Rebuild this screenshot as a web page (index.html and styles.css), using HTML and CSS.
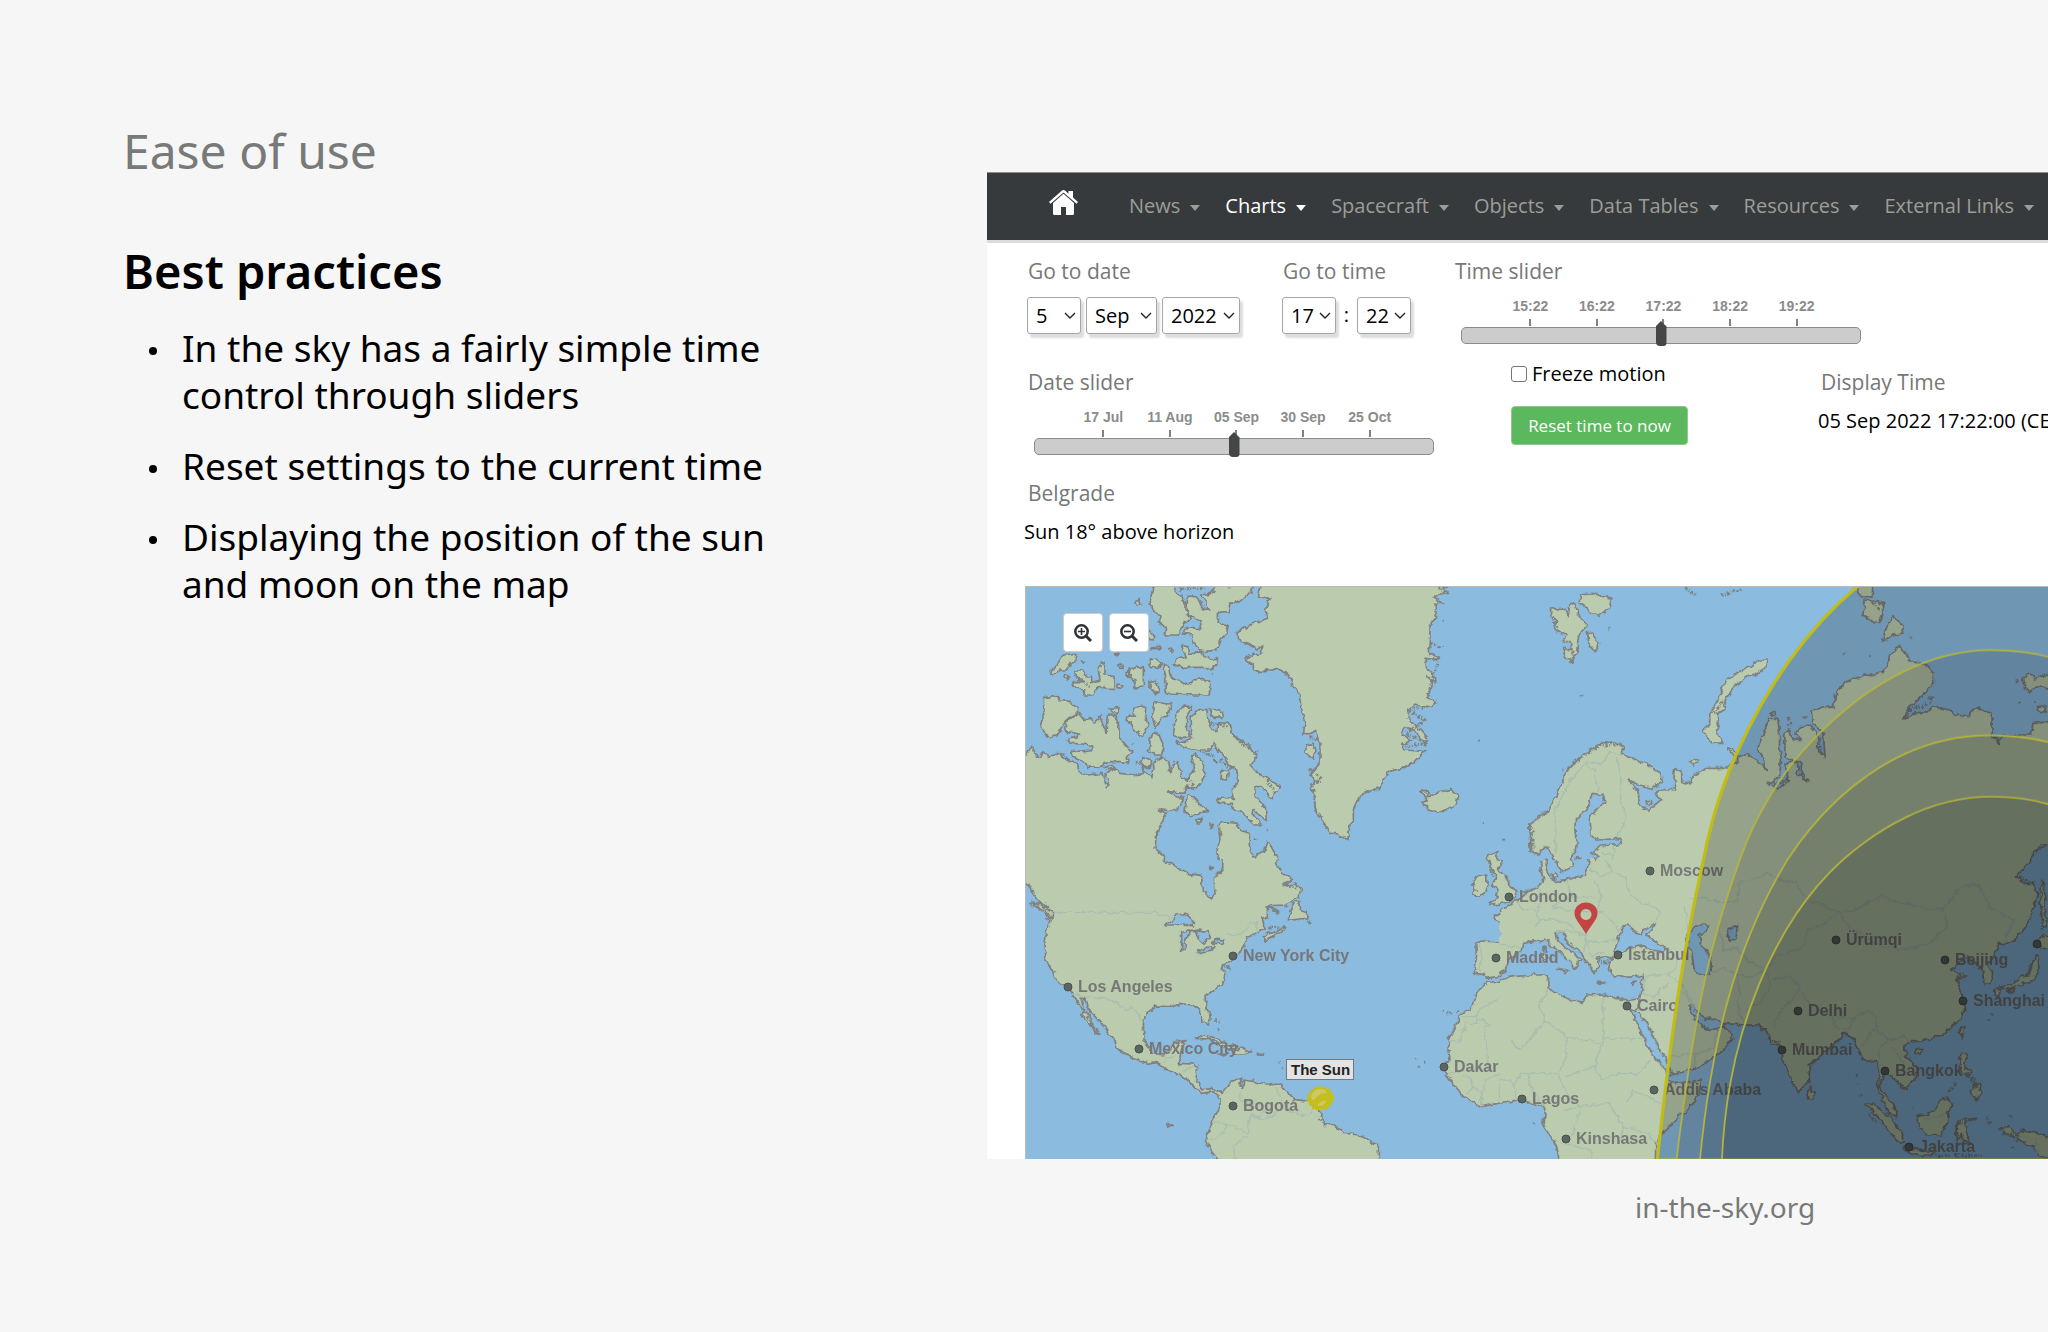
FILE: index.html
```html
<!DOCTYPE html>
<html lang="en">
<head>
<meta charset="utf-8">
<title>Ease of use</title>
<link rel="stylesheet" href="styles.css">
</head>
<body>
<main class="slide">
  <section class="notes">
    <p class="kicker">Ease of use</p>
    <h1>Best practices</h1>
    <ul>
      <li>In the sky has a fairly simple time<br>control through sliders</li>
      <li>Reset settings to the current time</li>
      <li>Displaying the position of the sun<br>and moon on the map</li>
    </ul>
  </section>

  <figure class="example">
    <div class="site">
      <nav class="nav">
        <a class="home" href="#" aria-label="Home">
          <svg viewBox="0 0 29 25" width="29" height="25"><path d="M14.500 3.800 4 13V23.500Q4 25 5.500 25H12V17H17V25H23.500Q25 25 25 23.500V13Z"/><path d="M14.500 0Q15.300 0 16 .6L19.500 3.700V1H24V7.500L29 12 27.500 13.700 14.500 2.600 1.500 13.700 0 12 13 .6Q13.700 0 14.500 0Z"/></svg>
        </a>
        <a class="item" href="#">News</a>
        <a class="item active" href="#">Charts</a>
        <a class="item" href="#">Spacecraft</a>
        <a class="item" href="#">Objects</a>
        <a class="item" href="#">Data Tables</a>
        <a class="item" href="#">Resources</a>
        <a class="item" href="#">External Links</a>
      </nav>

      <form class="controls">
        <div class="col-left">
          <div class="pickers">
            <fieldset class="pick-date">
              <legend class="label">Go to date</legend>
              <div class="selects">
                <select class="sel-day" aria-label="Day"><option>5</option></select>
                <select class="sel-month" aria-label="Month"><option>Sep</option></select>
                <select class="sel-year" aria-label="Year"><option>2022</option></select>
              </div>
            </fieldset>
            <fieldset>
              <legend class="label">Go to time</legend>
              <div class="selects">
                <select class="sel-day" aria-label="Hour"><option>17</option></select>
                <span class="colon">:</span>
                <select class="sel-day" aria-label="Minute"><option>22</option></select>
              </div>
            </fieldset>
          </div>
          <div class="slider">
            <label class="label" for="date-range">Date slider</label>
            <div class="ticks"><span>17 Jul</span><span>11 Aug</span><span>05 Sep</span><span>30 Sep</span><span>25 Oct</span></div>
            <input id="date-range" type="range" min="0" max="100" value="50">
          </div>
        </div>
        <div class="col-right">
          <div class="slider">
            <label class="label" for="time-range">Time slider</label>
            <div class="ticks"><span>15:22</span><span>16:22</span><span>17:22</span><span>18:22</span><span>19:22</span></div>
            <input id="time-range" type="range" min="0" max="100" value="50">
          </div>
          <div class="below">
            <div class="actions">
              <label class="check"><input type="checkbox">Freeze motion</label>
              <button class="reset" type="button">Reset time to now</button>
            </div>
            <div class="display">
              <p class="label">Display Time</p>
              <p class="value">05 Sep 2022 17:22:00 (CEST)</p>
            </div>
          </div>
        </div>
      </form>

      <div class="place">
        <p class="label">Belgrade</p>
        <p class="value">Sun 18° above horizon</p>
      </div>

      <div class="map">
        <div class="zoom">
          <button type="button" aria-label="Zoom in"><svg viewBox="0 0 18 18" width="18" height="18"><circle cx="7.500" cy="7.500" r="6.200"/><path class="handle" d="M12 12 17 17"/><path class="sign" d="M4 7.500H11M7.500 4V11"/></svg></button>
          <button type="button" aria-label="Zoom out"><svg viewBox="0 0 18 18" width="18" height="18"><circle cx="7.500" cy="7.500" r="6.200"/><path class="handle" d="M12 12 17 17"/><path class="sign" d="M4 7.500H11"/></svg></button>
        </div>
        <svg class="world" viewBox="0 0 1022 572" role="img" aria-label="World map with day and night regions">
          <defs>
            <clipPath id="tile-nw"><rect x="-10" y="-10" width="1451" height="851"/></clipPath>
            <clipPath id="tile-sw"><rect x="-10" y="0" width="1451" height="950"/></clipPath>
            <clipPath id="tile-ne"><rect x="0" y="-10" width="1700" height="851"/></clipPath>
            <clipPath id="tile-se"><rect x="0" y="0" width="1700" height="950"/></clipPath>
            <!-- roughens the coastlines -->
            <filter id="coast" filterUnits="userSpaceOnUse" x="-8" y="-8" width="1040" height="590" color-interpolation-filters="sRGB">
              <feTurbulence type="fractalNoise" baseFrequency=".16" numOctaves="2" seed="4" result="noise"/>
              <feDisplacementMap in="SourceGraphic" in2="noise" scale="6" xChannelSelector="R" yChannelSelector="G"/>
            </filter>
          </defs>
          <rect class="sea" width="1022" height="572"/>
          <g filter="url(#coast)">
          <g transform="scale(.33333) translate(-18 -21)">
            <!-- Arctic Canada, Greenland, Iceland -->
            <g clip-path="url(#tile-nw)">
              <path class="land" d="M-20 525 20 525 37 497 48 527 65 532 72 512 85 537 100 522 125 525 150 545 172 552 178 580 205 585 245 580 262 620 268 600 255 585 270 572 285 565 300 580 345 585 370 580 367 562 395 598 402 565 400 548 425 530 445 545 452 575 470 545 485 590 500 600 515 575 525 570 515 530 525 522 550 545 545 570 557 585 545 610 525 625 500 618 490 640 445 635 470 650 490 655 480 680 465 692 415 690 440 700 425 725 410 760 405 805 430 825 430 848 460 850 490 870 490 900-20 900Z
              M595 735 610 725 650 730 665 750 688 765 688 800 700 830 730 815 742 782 760 815 775 835 780 900 610 900 608 860 590 815 600 780Z
              M540 385 560 385 565 430 585 455 600 428 625 430 640 465 690 500 710 530 690 555 720 585 750 600 778 618 765 640 755 658 725 620 705 620 705 645 740 690 742 725 700 690 695 700 725 735 705 735 670 700 640 685 635 670 600 670 590 660 610 652 640 655 637 632 655 600 650 570 620 545 605 520 580 490 570 510 520 510 480 495 468 485 495 487 515 475 512 445 510 410Z
              M475 395 490 378 515 380 500 410 500 440 510 470 490 475 460 467 465 420ZM568 385 600 387 612 410 580 412ZM400 368 455 372 440 410 425 410 415 430 405 445 398 410ZM340 385 378 380 375 405 385 440 365 468 345 450 340 435 318 420 325 405 345 410ZM270 385 297 383 292 405 280 400ZM400 455 415 460 432 500 425 525 405 525 388 515 390 480ZM365 530 395 540 390 565 370 560 360 545Z
              M145 420 175 400 190 418 215 415 220 430 240 410 258 460 262 405 285 410 295 430 300 475 335 515 320 525 325 550 300 545 270 545 240 560 200 562 185 540 160 530 155 515 215 510 215 498 190 492 150 490 145 478 175 470 175 462 140 455 135 435Z
              M70 352 115 350 125 362 150 365 172 385 172 400 145 415 125 440 115 465 92 475 60 442 72 400ZM130 225 168 220 165 245 150 252 140 270 120 270 92 285 95 265 110 255ZM165 270 185 270 200 290 215 285 215 308 240 300 235 270 245 245 255 265 255 285 285 290 285 325 260 325 240 320 215 345 190 345 195 330 155 318 160 305 190 305 165 285ZM320 290 335 265 350 262 370 260 370 320 345 325 345 300ZM390 305 405 300 415 320 420 340 405 338 390 325ZM430 255 445 255 450 285 470 300 500 315 520 300 550 295 570 310 568 345 520 345 450 342 435 335 438 290ZM390 240 410 237 425 250 415 265 390 262ZM385 150 400 165 400 182 385 182Z
              M405 0 395 40 390 70 400 95 420 105 415 125 440 145 435 165 475 165 480 145 510 115 505 95 495 70 485 50 470 40 465 28 455 0ZM500 55 510 45 530 48 545 80 570 90 555 65 545 45 575 40 600 0 710 0 690 40 655 65 630 70 625 95 595 97 595 125 625 140 620 160 600 180 590 210 545 215 530 200 520 185 515 165 490 160 495 145 520 140 545 148 540 120 510 105 498 85ZM485 195 505 200 510 225 540 212 550 230 590 240 590 255 570 270 550 262 480 262 460 255 475 235 495 230Z
              M502 645 525 655 545 680 565 695 545 697 510 708 495 695ZM530 720 547 715 535 735ZM605 575 625 570 622 600 603 598ZM255 562 280 556 282 564 258 570ZM345 62 360 58 362 75 350 76ZM448 202 462 212 455 218ZM286 218 298 220 292 227ZM184 242 196 244 188 249ZM294 255 308 256 306 262 295 261ZM138 284 148 290 140 300 134 295ZM294 312 306 316 302 326 294 323ZM392 200 420 200 420 206 392 206ZM570 735 580 733 576 743ZM318 275 332 270 330 290 320 286Z
              M728 0 715 50 750 55 740 90 740 115 700 130 655 155 655 180 690 195 710 210 725 198 725 218 672 235 700 255 700 272 735 275 770 265 800 280 815 295 818 320 835 335 850 410 855 430 850 465 870 460 890 450 892 475 900 490 900 545 880 570 870 590 885 600 870 625 885 650 890 690 905 720 935 760 955 762 975 780 985 770 990 735 1000 720 1000 690 1020 645 1080 622 1105 575 1150 565 1185 545 1215 515 1150 510 1145 495 1175 480 1150 465 1150 445 1180 450 1220 495 1222 475 1190 440 1165 415 1165 395 1185 375 1235 385 1250 365 1220 355 1240 310 1220 290 1250 310 1245 290 1220 265 1215 235 1260 238 1225 215 1230 160 1230 135 1250 115 1245 70 1270 70 1240 50 1285 40 1270 25 1290 0Z
              M1200 635 1225 630 1220 650 1240 648 1260 635 1295 628 1315 650 1300 680 1255 700 1225 690 1215 672 1200 665 1222 660ZM1402 825 1432 815 1430 835 1450 840 1440 870 1405 870Z
              M858 495 880 490 888 515 878 535 858 520Z"/>
              <path class="fjord" d="M1255 22 1275 40M1232 190 1260 200M1255 230 1225 345M1225 380 1165 390 1215 420 1160 460 1220 490 1150 500M870 470 895 480M870 570 905 600 875 610 890 690M570 430 620 440M630 455 670 495 710 520 700 545M740 600 765 640M1040 635 1075 628M480 28 550 22M960 768 985 775M1205 638 1225 640M540 515 590 530M600 540 640 570M330 265 325 300M500 600 520 615M160 285 210 320"/>
              <path class="islet" d="M1371 481h6M1388 732h4M1452 776h4M1268 122h4M1265 195h6M575 282h4M700 775h6M740 748h4M338 495h4M350 548h4M625 20h4M582 545h6"/>
            </g>
            <!-- The Americas and the Atlantic -->
            <g clip-path="url(#tile-sw)" transform="translate(0 840)">
              <path class="land" d="M-20-20 430-20 430 3 450 10 470 20 500 40 545 47 547 95 560 100 572 118 585 105 583 55 608 28 610-20 770-20 770 10 785 40 820 55 790 80 825 72 842 85 838 110 820 117 800 135 742 137 742 170 725 175 735 205 705 220 680 235 672 260 660 275 635 290 640 300 605 320 615 345 608 370 580 390 555 410 560 440 570 470 568 495 550 485 535 445 515 435 480 430 460 440 440 440 410 438 378 460 370 490 372 540 385 560 400 580 430 585 455 570 458 550 495 542 485 570 475 610 520 612 533 620 528 660 545 690 575 685 600 692 605 700 615 690 630 665 665 652 660 675 668 685 672 660 700 665 740 675 780 672 800 695 825 718 865 725 890 740 905 770 910 790 940 795 970 820 1020 825 1050 845 1075 855 1075 920 600 920 590 895 560 855 560 830 572 800 580 775 600 745 600 710 580 695 545 700 515 675 500 655 480 645 440 630 410 605 385 610 340 595 290 565 285 540 245 490 210 455 200 430 195 415 183 415 190 445 210 470 215 495 240 520 225 515 205 490 185 470 190 455 170 420 155 395 135 378 118 372 105 350 78 300 75 250 80 210 90 185 65 150 30 130 75 135 98 155 95 180 60 130 40 105 20 70-20 50Z
              M820 130 835 122 840 148 860 155 865 180 835 178 805 180ZM728 232 745 220 770 215 795 198 790 212 760 225 735 242ZM742 140 775 155 755 153ZM525 535 550 525 580 532 620 550 650 560 645 568 610 560 570 537ZM640 572 670 565 697 575 675 582 645 582ZM712 580 734 580 732 586 712 585ZM598 583 620 583 612 588ZM443 792 455 796 445 802ZM570 22 582 22 574 28Z
              M1370 50 1400 45 1402 92 1380 108 1355 105 1365 90 1358 72ZM1402-20 1410 20 1415 30 1432 45 1415 75 1432 88 1428 105 1440 108 1410 135 1500 128 1500 80 1450 45 1435 28 1448 0 1448-20Z
              M1500 140 1470 150 1450 160 1420 165 1425 178 1450 190 1458 220 1450 247 1385 243 1367 250 1370 290 1363 340 1390 343 1402 355 1440 348 1460 335 1500 335ZM1500 355 1475 360 1445 365 1405 366 1370 400 1360 440 1320 465 1305 500 1285 540 1290 600 1270 622 1285 655 1300 670 1330 710 1385 740 1440 728 1500 722Z"/>
              <path class="water" d="M437 195 470 165 500 160 520 180 520 198 490 192 465 195ZM485 215 505 210 510 218 495 240 495 270 485 273ZM510 215 535 210 565 215 572 232 550 252 538 240 530 215ZM533 275 560 262 585 260 575 270 545 277ZM575 250 590 238 612 240 605 250Z"/>
              <path class="fjord" d="M25 70 45 105M35 125 75 140 95 180M790 70 835 90M745 200 795 205M865 165 870 190M450 440 480 435M605 315 630 325M200 470 235 520M1410 10 1418 50M1400 352 1415 355M900 775 920 805M665 660 668 680M1282 645 1295 660M560 535 640 570M750 145 775 155"/>
              <path class="border" d="M98 157H410L450 175M620 225 670 222 690 185 710 190 712 215M155 398 190 410 275 418 315 450 335 440 370 485M432 610 440 590 462 590M665 690 660 720 740 740 720 770 690 765 685 820 640 860 650 900M690 770 740 778 790 740 770 680M580 780 625 795 685 820M625 795 590 835 565 835M830 722V765L870 765 880 735M790 740 830 765M480 640 500 625 530 620M1372 250 1385 275 1380 335M1445 368 1450 405 1415 430 1375 450 1370 470H1325M1285 545 1320 545 1322 515 1338 510V490H1370V470L1410 495 1395 500 1405 630 1325 632M1470 540 1450 545M1325 632 1290 640M1340 700 1360 680 1350 655 1325 650M1360 680 1385 700 1385 740M1385 700 1400 660 1440 640M1440 670 1435 728"/>
              <path class="islet" d="M585 480h6M598 487h6M590 505l6 8M775 605h4M785 625h4M1268 452h4M1280 460h14M1312 455l8-2M1185 598h4M1212 605h4M1192 620h10M1540 787h4"/>
            </g>
            <!-- Scandinavia and northern Russia -->
            <g clip-path="url(#tile-ne)" transform="translate(1440 0) scale(1.0485 1)">
              <path class="land" d="M85 735 110 712 140 690 165 640 180 600 195 570 230 530 290 490 330 485 355 500 345 520 385 540 410 545 460 580 465 610 435 625 400 615 370 600 395 635 400 675 425 690 460 660 445 640 470 625 500 630 505 605 495 590 500 565 520 575 520 605 545 605 555 585 590 565 640 565 680 548 680 525 710 525 740 545 762 568 755 535 740 510 750 470 770 415 795 415 800 460 800 500 805 540 800 580 780 605 765 610 795 628 825 600 820 575 815 550 850 545 850 580 880 605 865 575 860 545 830 540 815 530 815 460 825 450 835 475 865 480 845 460 860 440 885 435 910 465 905 500 930 530 925 460 895 430 890 390 955 378 960 340 990 305 1030 290 1090 280 1110 255 1115 225 1140 200 1160 210 1170 245 1215 250 1240 280 1240 310 1220 335 1170 385 1155 420 1180 400 1225 395 1240 380 1290 390 1300 405 1345 410 1350 385 1385 390 1408 405 1408 465 1425 490 1440 465 1520 465 1525 430 1568 425 1640 420 1640 795 1568 795 1545 800 1495 865 1470 900 255 900 255 850 285 830 265 820 290 795 350 790 345 775 275 780 260 765 258 710 300 665 295 645 265 640 250 685 215 720 215 765 225 785 205 830 200 900 168 900 160 860 150 820 130 800 110 825 90 815Z
              M145 80 165 90 185 85 195 110 200 70 215 72 225 110 250 135 225 165 220 210 205 250 180 215 185 205 205 210 205 185 180 185 195 165 175 160 150 140 165 125 145 105ZM230 45 265 40 300 50 320 55 310 85 285 105 260 100 245 80 230 70ZM250 155 265 165 285 190 272 215 255 195Z
              M740 240 765 240 760 262 730 285 705 290 680 310 660 335 645 360 640 390 620 400 625 430 620 455 638 490 605 488 590 465 580 450 600 430 600 400 615 375 630 345 640 310 665 285 715 262Z
              M1015 0 1068 0 1065 45 1040 52 1025 40ZM1040 60 1065 62 1095 70 1095 105 1085 130 1060 120 1038 105 1045 80ZM1095 183 1105 145 1125 110 1145 125 1152 155 1130 165ZM1498 290 1515 280 1530 295 1550 285 1640 290 1640 335 1540 320 1515 338 1500 315ZM1535 380 1560 378 1560 395 1545 398ZM542 545 557 535 565 543 553 555ZM655 505 665 505 680 525 672 530ZM115 850 135 838 140 900 115 900ZM222 832 228 830 226 850 220 852ZM418 662 430 662 432 672 420 672ZM778 395 788 395 788 403 778 403ZM1222 352 1240 352 1234 360Z"/>
              <path class="fjord" d="M90 735 92 815M105 715 140 690M195 565 240 525 290 495 350 495M150 110 165 160M610 400 640 360M530 25 560 45M630 45 690 28M905 460 920 520M780 612 815 605M845 545 870 595M1170 390 1230 370M1040 285 1080 285M955 340 960 370M825 410 830 440M1410 470 1435 485M205 215 208 245M1065 70 1085 85"/>
              <path class="border" d="M160 820 158 690 200 600 245 550 270 570 283 635M245 545 290 555 310 520 335 520M335 530 345 590 345 660 362 715 335 770M290 815 325 830 327 880M325 795V830"/>
              <path class="islet" d="M310 146h6M228 349h8M980 222h6M1056 228h5M1175 175h6M866 412h12M1478 292v18M1479 368h6M1528 366h5M0 776h12M175 568h6M0 845l6-6"/>
            </g>
            <!-- Europe, Africa and Asia -->
            <g clip-path="url(#tile-se)" transform="translate(1440 840) scale(1.0485 1)">
              <path class="land" d="M-20 160 0 155 45 125 70 105 85 90 115 80 125 60 118 30 115-20 138-20 132 10 140 50 160 65 205 55 245 45 255 0 255-20 1540-20 1520 0 1475 48 1500 70 1520 70 1540 95 1530 130 1510 190 1470 240 1440 255 1430 250 1410 290 1395 310 1410 345 1405 370 1385 372 1380 330 1370 310 1350 305 1340 290 1310 310 1290 330 1335 345 1305 360 1315 380 1325 420 1330 450 1310 485 1270 520 1220 540 1190 545 1170 545 1155 565 1165 590 1190 620 1195 650 1165 680 1150 690 1145 670 1120 650 1100 635 1085 680 1105 710 1130 740 1135 770 1115 760 1095 720 1080 680 1088 640 1075 600 1045 605 1030 580 1010 535 985 520 950 560 920 585 885 615 885 660 855 695 835 665 810 600 805 560 775 550 775 530 740 495 700 495 635 490 620 480 590 475 560 455 553 435 540 440 560 480 575 490 590 510 625 505 640 495 665 535 640 570 600 600 560 625 490 645 485 620 460 570 420 490 392 455 400 415 410 345 385 350 350 352 320 345 312 320 310 305 330 295 300 290 275 295 280 320 270 345 260 325 240 290 230 275 195 250 180 215 160 215 165 240 190 265 235 300 222 305 215 330 205 305 170 275 145 255 130 237 100 245 65 250 60 275 25 300 15 330 0 342-20 340Z
              M-20-20 8-20 8 0-5 28 10 45 28 70 30 82 46 90 38 112 45 122 0 130-20 132ZM158-20 165 15 180 38 205 20 210-20ZM146 42 160 38 165 50 152 56Z
              M-20 358 0 360 35 350 100 345 135 345 140 370 140 385 190 415 235 430 245 405 300 402 330 415 375 420 400 415 392 455 365 440 385 470 410 530 440 590 475 630 480 660 500 670 575 660 570 700 540 745 470 810 445 850 445 920 170 920 170 885 155 845 125 800 130 750 125 740 90 730 60 715 20 728-20 730Z
              M885 680 900 700 895 720 880 720ZM1045 730 1065 730 1110 765 1145 810 1160 845 1145 850 1110 810 1080 770ZM1155 860 1190 868 1240 875 1240 885 1190 885 1155 870ZM1195 770 1230 760 1260 725 1280 712 1295 735 1280 760 1285 780 1260 825 1215 820 1200 800ZM1310 780 1365 775 1330 790 1335 815 1345 850 1325 840 1320 820 1310 850 1305 810ZM1430 805 1455 800 1475 820 1500 812 1640 845 1640 930 1540 885 1530 860 1490 845 1450 820ZM1318 580 1335 580 1330 620 1350 640 1335 650 1315 620ZM1345 690 1370 670 1380 700 1365 720 1350 710ZM1320 500 1330 505 1322 535 1310 520ZM1190 570 1210 565 1205 582 1190 580ZM1415 390 1430 385 1430 410 1418 405ZM1430 378 1470 370 1490 350 1515 340 1530 290 1540 285 1542 330 1530 360 1500 370 1450 388ZM1450 394 1475 382 1470 397ZM1535 245 1560 225 1640 240 1640 265 1550 265ZM1550 60 1558 80 1560 150 1566 200 1552 200 1546 130ZM120 282 132 280 130 306 121 304ZM122 260 130 258 128 274ZM165 325 192 330 186 338ZM372 370 390 366 382 376ZM280 363 302 368 290 370Z"/>
              <path class="water" d="M328 275 340 225 360 195 375 200 385 215 400 222 412 207 445 190 435 210 420 225 450 250 475 265 470 275 430 270 400 255 370 265 350 280ZM530 230 560 195 595 195 590 215 570 225 575 250 595 275 605 320 600 345 575 345 555 325 550 290 540 260ZM655 210 680 195 675 235 660 240 650 225Z"/>
              <path class="fjord" d="M280 300 315 315M255 315 275 345M1485 50 1530 75M1335 640 1370 690M1285 695 1305 670M1310 790 1360 778M1390 770 1400 790M1300 885 1380 888M1430 380 1470 390M1055 760 1080 790M1440 820 1490 830M1550 140V220M1305 350 1325 345M770 535 800 550M980 520 1000 530M70 98 85 90M1235 885 1290 888M1170 690 1150 690M1350 650 1365 670"/>
              <path class="border" d="M45 125 65 145 110 150 110 180 105 200M110 150 115 80M110 180 150 175 215 200 210 215 160 215M190 60 205 110 150 140 215 155 240 155 290 155 320 180 340 215M270 60 290 110 275 155M205 110 270 110M255 20 290 50 320 30 360 55 370 100 400 125 455 150 445 190M300 0 320 30M240 215 250 240 290 250 335 240M210 215 245 230 240 275M250 240 260 290 300 275M0 255 60 262M480 265 510 290 500 330 480 345 415 345M530 140 540 240M480 345 520 370 540 410 560 440M415 350 410 400 440 410 480 370M545 120 570 110 620 125 680 125 685 70 770 40 800 60 845 65 880 120 920 130 965 155 1010 155 1045 130 1090 110 1140 125 1200 140 1265 150 1320 80 1370 75 1400 140 1470 180 1440 250M965 155 1000 200 1080 255 1160 270 1230 250 1280 200 1270 150M600 335 640 325 680 345 720 350 760 330 790 290 870 260 880 205 920 200 965 155M680 345 685 400 680 450 700 490M630 220 640 270 680 265 720 310 760 330M760 330 775 380 740 430 700 450M780 360 830 350 860 385 830 420 800 460 780 500M860 385 880 430 950 470 1010 475 1050 450 1080 470 1075 500 1035 560M950 470 960 500 1000 505 1010 475M1075 500 1110 540 1150 530 1175 545M1110 540 1080 570 1090 640M1120 560 1150 600 1160 650M295 405V535H410M300 535 280 580 270 620 290 660 340 640 400 640 430 600M140 385 110 440 130 480 190 530 290 550M130 480 60 570 30 540M190 530 190 590 165 640 80 640 60 640 40 680 50 715M165 640 190 700 230 740 310 730 355 800 340 850M80 640 95 700 130 740M355 800 420 820 450 850M360 730 380 690 440 720 470 740M180 750 230 740 210 820 180 850 260 870V900M490 590 560 580 610 565 625 505M560 580 555 620M270 620 190 650M0 660 30 660 40 680M1215 775 1260 770 1280 755M1535 830V890M520 390 560 450"/>
              <path class="islet" d="M94 787h6M1408 460h6M1392 480h8M1018 645h6M1026 710h5M1462 860h6M1460 770h8M1180 745h4M1020 670h4"/>
            </g>
          </g>
          </g>

          <g class="city">
            <circle cx="42" cy="400" r="4"/><text x="52" y="405">Los Angeles</text>
            <circle cx="207" cy="369" r="4"/><text x="217" y="374">New York City</text>
            <circle cx="113" cy="462" r="4"/><text x="123" y="467">Mexico City</text>
            <circle cx="207" cy="519" r="4"/><text x="217" y="524">Bogotá</text>
            <circle cx="483" cy="310" r="4"/><text x="493" y="315">London</text>
            <circle cx="418" cy="480" r="4"/><text x="428" y="485">Dakar</text>
            <circle cx="470" cy="371" r="4"/><text x="480" y="376">Madrid</text>
            <circle cx="496" cy="512" r="4"/><text x="506" y="517">Lagos</text>
            <circle cx="624" cy="284" r="4"/><text x="634" y="289">Moscow</text>
            <circle cx="592" cy="368" r="4"/><text x="602" y="373">İstanbul</text>
            <circle cx="601" cy="419" r="4"/><text x="611" y="424">Cairo</text>
            <circle cx="628" cy="503" r="4"/><text x="638" y="508">Addis Ababa</text>
            <circle cx="540" cy="552" r="4"/><text x="550" y="557">Kinshasa</text>
            <circle cx="810" cy="353" r="4"/><text x="820" y="358">Ürümqi</text>
            <circle cx="919" cy="373" r="4"/><text x="929" y="378">Beijing</text>
            <circle cx="937" cy="414" r="4"/><text x="947" y="419">Shanghai</text>
            <circle cx="772" cy="424" r="4"/><text x="782" y="429">Delhi</text>
            <circle cx="756" cy="463" r="4"/><text x="766" y="468">Mumbai</text>
            <circle cx="859" cy="484" r="4"/><text x="869" y="489">Bangkok</text>
            <circle cx="883" cy="560" r="4"/><text x="893" y="565">Jakarta</text>
            <circle cx="1011" cy="357" r="4"/>
          </g>

          <!-- twilight bands and night side -->
          <g class="night" transform="scale(.33333) translate(1422 -21) scale(1.0485 1)">
            <path class="dusk" d="M1040 2 1020 22C870 155 760 325 675 525C632 626 600 740 582 840C535 1060 495 1300 450 1740H1640V2Z"/>
            <path d="M1640 255 1568 230C1515 215 1460 210 1405 210C1180 210 980 370 840 545C780 625 720 735 686 840C610 1060 560 1260 505 1740H1640Z"/>
            <path d="M1640 511 1568 486C1515 472 1455 466 1400 466C1140 466 940 650 822 840C700 1050 610 1320 572 1740H1640Z"/>
            <path d="M1640 697 1568 672C1515 656 1460 650 1405 650C1230 650 1090 740 980 840C790 1020 650 1350 635 1740H1640Z"/>
          </g>

          <g class="sun">
            <path d="M294 498l2 3 3-2 1 3 3-1 1 3 3 1-1 3 3 2-2 2 1 3-3 1 0 3-3 1-1 3-3-1-2 2-2-2-3 2-2-2-3 0 0-3-3-1 0-3-3-2 2-2-1-3 3-2 0-3 3 0 1-3 3 1z"/>
            <path class="glow" d="M285 509q3-8 11-7q5 2 5 4q-9 0-12 6q-3 3-4-3zM291 519q3-5 9-6q0 6-9 6z"/>
            <rect x="260.500" y="472.500" width="67" height="20"/>
            <text x="265" y="488">The Sun</text>
          </g>
          <path class="pin" fill-rule="evenodd" d="M560 347C554 337 548.500 332 548.500 326A11.500 10.500 0 0 1 571.500 326C571.500 332 566 337 560 347ZM560 322a5.500 5.500 0 1 0 .01 0Z"/>
        </svg>
      </div>
    </div>
    <figcaption>in-the-sky.org</figcaption>
  </figure>
</main>
</body>
</html>
```

FILE: styles.css
```css
* { box-sizing: border-box; }

body {
  margin: 0;
  background: #f6f6f6;
  color: #000;
  font-family: "Noto Sans", sans-serif;
  overflow-x: hidden;
}

p, h1, ul, figure, fieldset { margin: 0; padding: 0; border: 0; }

.slide {
  display: grid;
  grid-template-columns: minmax(0, 987fr) minmax(0, 1061fr);
  min-height: 100vh;
}

/* left side */
.notes { padding: 119px 0 0 120px; }
.kicker { padding-left: 3px; font-size: 48px; line-height: 64px; color: #777a79; }
h1 { margin-top: 56px; padding-left: 3px; font-size: 47px; line-height: 64px; font-weight: 600; }
.notes ul {
  display: grid;
  gap: 24px;
  margin-top: 21px;
  list-style: none;
}
.notes li {
  position: relative;
  padding-left: 62px;
  font-size: 37px;
  line-height: 47px;
}
.notes li::before {
  content: "";
  position: absolute;
  left: 29px;
  top: 23px;
  width: 8px;
  height: 8px;
  border-radius: 50%;
  background: #000;
}

/* right side */
.example { padding-top: 172px; }
.site {
  background: #fff;
  font-family: "Open Sans", sans-serif;
  font-size: 20px;
  line-height: 28px;
  overflow: hidden;
}
figcaption {
  padding: 28px 0 0 648px;
  font-size: 28px;
  line-height: 40px;
  color: #777a79;
}

.nav {
  display: flex;
  align-items: center;
  height: 71px;
  padding: 0 0 2px 62px;
  background: #373a3c;
  border-top: 1px solid #8a8c8d;
  border-bottom: 3px solid #dcdcdc;
  white-space: nowrap;
}
.nav a { color: #9b9e98; text-decoration: none; }
.nav .home { display: flex; margin: 0 51px 6px 0; }
.home svg { fill: #fff; }
.nav .item { display: flex; align-items: center; gap: 10px; margin-right: 25px; }
.nav .item::after {
  content: "";
  margin-top: 4px;
  border: 5px solid transparent;
  border-top: 6px solid currentColor;
  border-bottom: 0;
}
.nav .active { color: #fff; }

.controls { display: flex; padding: 14px 0 0 40px; }
.label {
  display: block;
  padding: 0 0 0 1px;
  font-size: 21px;
  line-height: 28px;
  color: #777;
  white-space: nowrap;
}
.value { white-space: nowrap; }
.col-left { flex: 0 0 427px; }
.col-right { flex: 1 1 auto; min-width: 0; }
.pickers { display: flex; }
.pick-date { flex: 0 0 255px; }
.selects { display: flex; gap: 5px; padding-top: 12px; }
.colon { width: 11px; text-align: center; line-height: 36px; }
select {
  appearance: none;
  height: 37px;
  padding: 0 8px;
  border: 1px solid #a6a6a6;
  border-radius: 3px;
  background: #fff url("data:image/svg+xml,%3Csvg xmlns='http://www.w3.org/2000/svg' width='12' height='8'%3E%3Cpath d='M1 1 6 6 11 1' fill='none' stroke='%23222' stroke-width='1.400'/%3E%3C/svg%3E") no-repeat right 4px center;
  box-shadow: 3px 4px 2px #ddd;
  color: #000;
  font: 20px "Open Sans", sans-serif;
}
.sel-day { width: 54px; }
.sel-month { width: 71px; }
.sel-year { width: 78px; }

.col-left .slider { margin-top: 34px; }
.ticks {
  display: grid;
  grid-template-columns: repeat(5, 1fr);
  width: 399px;
  margin: 13px 0 0 7px;
  padding: 0 30px 0 36px;
  font: bold 14px/16px "Liberation Sans", sans-serif;
  color: #8a8c8b;
  text-align: center;
}
.ticks span::after {
  content: "";
  display: block;
  width: 2px;
  height: 7px;
  margin: 5px auto 1px;
  background: #808080;
}
input[type="range"] {
  appearance: none;
  display: block;
  width: 400px;
  height: 17px;
  margin: 0 0 0 7px;
  border: 1px solid #8a8c8b;
  border-radius: 5px;
  background: #cbcdcc;
}
input[type="range"]::-webkit-slider-thumb {
  appearance: none;
  width: 11px;
  height: 25px;
  margin-top: -4px;
  border-radius: 0 0 4px 4px;
  background: #444647;
  clip-path: polygon(50% 0, 100% 22%, 100% 100%, 0 100%, 0 22%);
}

.below { display: flex; padding: 16px 0 0 57px; }
.actions { flex: 0 0 307px; }
.check { display: flex; align-items: center; gap: 5px; }
.check input {
  appearance: none;
  width: 16px;
  height: 16px;
  margin: 0;
  border: 1px solid #767676;
  border-radius: 3px;
  background: #fff;
}
.reset {
  width: 177px;
  height: 39px;
  margin-top: 18px;
  padding: 0;
  border: 1px solid #8fc98f;
  border-radius: 4px;
  background: #5cb85c;
  color: #fff;
  font: 17px "Open Sans", sans-serif;
}
.display { padding-top: 8px; }
.display .label { padding-left: 3px; }
.display .value { margin-top: 11px; }

.place { padding: 24px 0 40px 37px; }
.place .label { padding-left: 4px; }
.place .value { margin-top: 11px; }

/* map */
.map {
  position: relative;
  margin-left: 38px;
  border: solid #b9b9b9;
  border-width: 1px 0 0 1px;
}
.world { display: block; width: 100%; height: auto; }
.zoom {
  position: absolute;
  left: 37px;
  top: 26px;
  display: flex;
  gap: 6px;
}
.zoom button {
  display: grid;
  place-items: center;
  width: 40px;
  height: 39px;
  padding: 0;
  border: 1px solid #ccc;
  border-radius: 4px;
  background: #fff;
}
.zoom svg { fill: none; stroke: #2f3335; stroke-width: 2.500; }
.zoom .handle { stroke-width: 3; }
.zoom .sign { stroke-width: 1.600; }

.sea { fill: #8bbce0; }
.land, .water { fill: #bbccae; stroke: #808080; stroke-width: 5; stroke-linejoin: round; }
.water { fill: #8bbce0; }
.fjord { fill: none; stroke: #7d8482; stroke-width: 9; stroke-dasharray: 7 4 3 5; stroke-linejoin: round; }
.islet { fill: none; stroke: #808080; stroke-width: 5; }
.border { fill: none; stroke: #a9bdb0; stroke-width: 4; stroke-linejoin: round; }
.city circle { fill: #5c6661; stroke: #4a504d; stroke-width: 1; }
.city text { fill: #777; font: bold 16px "Liberation Sans", sans-serif; }
.night path { fill: rgba(0, 0, 0, .12); stroke: #b4b43c; stroke-width: 5; }
.night .dusk { fill: rgba(0, 0, 0, .2); stroke: #c3bd12; stroke-width: 9; }
.sun path { fill: #c4bf1c; }
.sun .glow { fill: #cdc865; }
.sun rect { fill: #e3e3e3; stroke: #777; }
.sun text { fill: #222; font: bold 15px "Liberation Sans", sans-serif; }
.pin { fill: #c44343; }
```
